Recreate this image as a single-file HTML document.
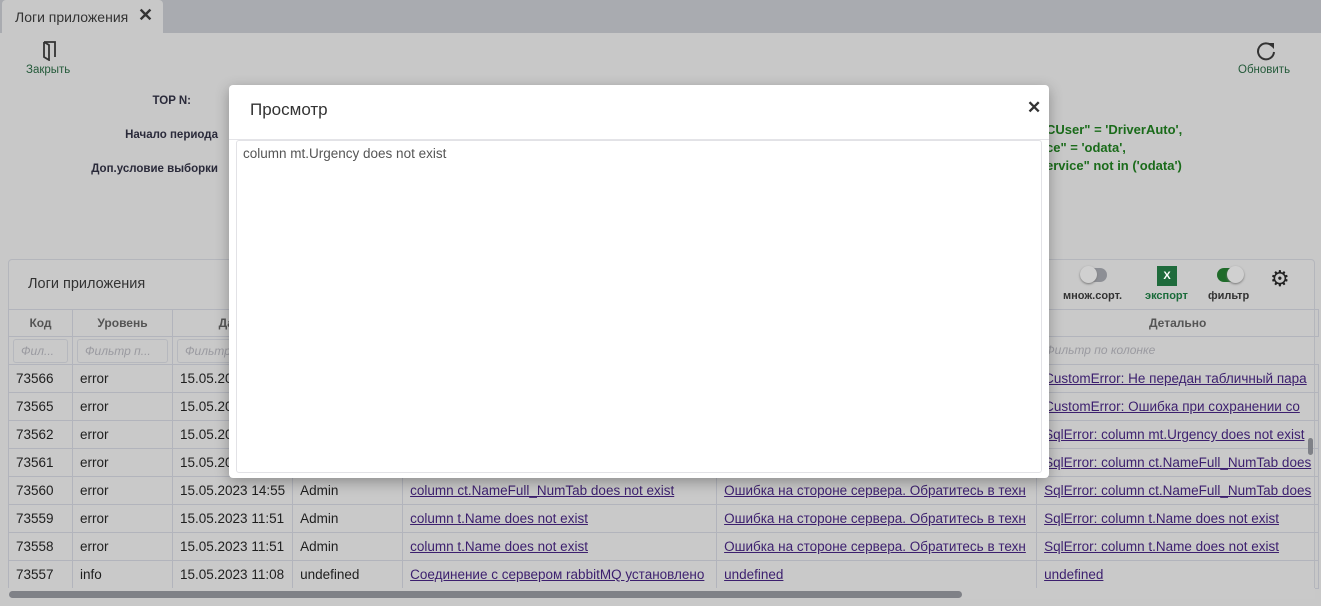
<!DOCTYPE html>
<html><head><meta charset="utf-8"><style>
*{box-sizing:border-box;margin:0;padding:0}
body{width:1321px;height:606px;overflow:hidden;background:#c8c8c8;font-family:"Liberation Sans",sans-serif;font-size:13px;color:#1e1e1e;position:relative}
.a{position:absolute;white-space:nowrap}
.tabbar{left:0;top:0;width:1321px;height:33px;background:#a9abb0}
.tab{left:2px;top:0;width:161px;height:33px;background:#c8c8c8;border-radius:4px 4px 0 0}
.lbl{font-size:11.5px;font-weight:bold;color:#2a2a3a;text-align:right;width:180px}
.green{color:#1a6b1a;font-weight:bold;font-size:13px}
.panel{left:8px;top:259px;width:1307px;height:340px;border:1px solid #b4b6bc;border-radius:4px;background:#c9c9c9}
table{position:absolute;left:8px;top:309px;border-collapse:collapse;table-layout:fixed}
td,th{border:1px solid #b2b4bc;height:28px;padding:0 7px;overflow:hidden;white-space:nowrap;font-weight:normal;text-align:left;font-size:13.5px}
th{height:27px;text-align:center;color:#555;font-weight:bold;font-size:12px}
tr.f td{height:28px;padding:0 4px}
.fi{border:1px solid #b6b8be;border-radius:3px;height:24px;font-style:italic;color:#9a9aa0;font-size:12px;line-height:22px;padding:0 7px;overflow:hidden}
a{color:#3c1f6e;text-decoration:underline}
.modal{left:229px;top:85px;width:820px;height:393px;background:#fff;border-radius:4px;box-shadow:0 4px 14px rgba(0,0,0,.3)}
</style></head><body>
<div class="a tabbar"></div>
<div class="a tab"><span class="a" style="left:13px;top:9px;font-size:14px;color:#333">Логи приложения</span><span class="a" style="left:136px;top:5px;font-size:18px;font-weight:bold;color:#333">✕</span></div>
<svg class="a" style="left:42px;top:41px" width="16" height="20" viewBox="0 0 16 20"><path d="M2 1h11v15M2 1v15l5 3V4L2 1" fill="none" stroke="#333" stroke-width="1.8"/></svg>
<div class="a" style="left:26px;top:64px;font-size:11.5px;color:#245a3a">Закрыть</div>
<svg class="a" style="left:1255px;top:40px" width="22" height="22" viewBox="0 0 22 22"><path d="M17 6A8 8 0 1 0 19 12" fill="none" stroke="#333" stroke-width="2"/><path d="M13 3h6v6z" fill="#333"/></svg>
<div class="a" style="left:1238px;top:64px;font-size:11.5px;color:#245a3a">Обновить</div>
<div class="a lbl" style="left:11px;top:95px">TOP N:</div>
<div class="a lbl" style="left:38px;top:129px">Начало периода</div>
<div class="a lbl" style="left:38px;top:163px">Доп.условие выборки</div>
<div class="a green" style="left:1046px;top:122px">CUser" = 'DriverAuto',</div>
<div class="a green" style="left:1046px;top:140px">ce" = 'odata',</div>
<div class="a green" style="left:1046px;top:158px">ervice" not in ('odata')</div>
<div class="a panel"></div>
<div class="a" style="left:28px;top:276px;font-size:14.5px;color:#333">Логи приложения</div>
<div class="a" style="left:1081px;top:268px;width:26px;height:14px;border-radius:7px;background:#8d8f95"></div>
<div class="a" style="left:1080px;top:266px;width:17px;height:17px;border-radius:50%;background:#d0d0d0;box-shadow:0 1px 2px #777"></div>
<div class="a" style="left:1063px;top:290px;font-size:11px;font-weight:bold;color:#333">множ.сорт.</div>
<div class="a" style="left:1157px;top:266px;width:20px;height:20px;background:#1f6b3c;color:#fff;font-size:11px;font-weight:bold;text-align:center;line-height:20px">X</div>
<div class="a" style="left:1145px;top:290px;font-size:11px;font-weight:bold;color:#1a6b3a">экспорт</div>
<div class="a" style="left:1217px;top:268px;width:26px;height:14px;border-radius:7px;background:#1f6b2a"></div>
<div class="a" style="left:1227px;top:266px;width:17px;height:17px;border-radius:50%;background:#d0d0d0;box-shadow:0 1px 2px #777"></div>
<div class="a" style="left:1208px;top:290px;font-size:11px;font-weight:bold;color:#333">фильтр</div>
<div class="a" style="left:1270px;top:268px;font-size:22px;color:#222;line-height:22px">⚙</div>
<table>
<colgroup><col width="64"><col width="100"><col width="120"><col width="110"><col width="314"><col width="320"><col width="278"></colgroup>
<tr><th>Код</th><th>Уровень</th><th>Дата</th><th></th><th></th><th></th><th>Детально</th></tr>
<tr class="f"><td><div class="fi">Фил...</div></td><td><div class="fi">Фильтр п...</div></td><td><div class="fi">Фильтр</div></td><td></td><td></td><td></td><td style="border-right:none"><div class="fi" style="border:none;padding:0 4px">Фильтр по колонке</div></td></tr>
<tr><td>73566</td><td>error</td><td>15.05.2023</td><td></td><td></td><td></td><td><a>CustomError: Не передан табличный пара</a></td></tr>
<tr><td>73565</td><td>error</td><td>15.05.2023</td><td></td><td></td><td></td><td><a>CustomError: Ошибка при сохранении co</a></td></tr>
<tr><td>73562</td><td>error</td><td>15.05.2023</td><td></td><td></td><td></td><td><a>SqlError: column mt.Urgency does not exist</a></td></tr>
<tr><td>73561</td><td>error</td><td>15.05.2023</td><td></td><td></td><td></td><td><a>SqlError: column ct.NameFull_NumTab does</a></td></tr>
<tr><td>73560</td><td>error</td><td>15.05.2023 14:55</td><td>Admin</td><td><a>column ct.NameFull_NumTab does not exist</a></td><td><a>Ошибка на стороне сервера. Обратитесь в техн</a></td><td><a>SqlError: column ct.NameFull_NumTab does</a></td></tr>
<tr><td>73559</td><td>error</td><td>15.05.2023 11:51</td><td>Admin</td><td><a>column t.Name does not exist</a></td><td><a>Ошибка на стороне сервера. Обратитесь в техн</a></td><td><a>SqlError: column t.Name does not exist</a></td></tr>
<tr><td>73558</td><td>error</td><td>15.05.2023 11:51</td><td>Admin</td><td><a>column t.Name does not exist</a></td><td><a>Ошибка на стороне сервера. Обратитесь в техн</a></td><td><a>SqlError: column t.Name does not exist</a></td></tr>
<tr><td>73557</td><td>info</td><td>15.05.2023 11:08</td><td>undefined</td><td><a>Соединение с сервером rabbitMQ установлено</a></td><td><a>undefined</a></td><td><a>undefined</a></td></tr>
</table>
<div class="a" style="left:8px;top:588px;width:1307px;height:11px;background:#c9c9c9"></div>
<div class="a" style="left:9px;top:591px;width:953px;height:7px;border-radius:4px;background:#7f8187"></div>
<div class="a" style="left:1308px;top:438px;width:5px;height:17px;border-radius:3px;background:#7f8187"></div>
<div class="a modal">
<div class="a" style="left:21px;top:15px;font-size:17px;color:#333">Просмотр</div>
<div class="a" style="left:798px;top:13px;font-size:17px;font-weight:bold;color:#333">✕</div>
<div class="a" style="left:0;top:54px;width:820px;border-top:1px solid #e4e4e8"></div>
<div class="a" style="left:7px;top:55px;width:806px;height:333px;border:1px solid #e2e2e6;border-radius:3px"></div>
<div class="a" style="left:14px;top:61px;font-size:13.5px;color:#555">column mt.Urgency does not exist</div>
</div>
</body></html>
